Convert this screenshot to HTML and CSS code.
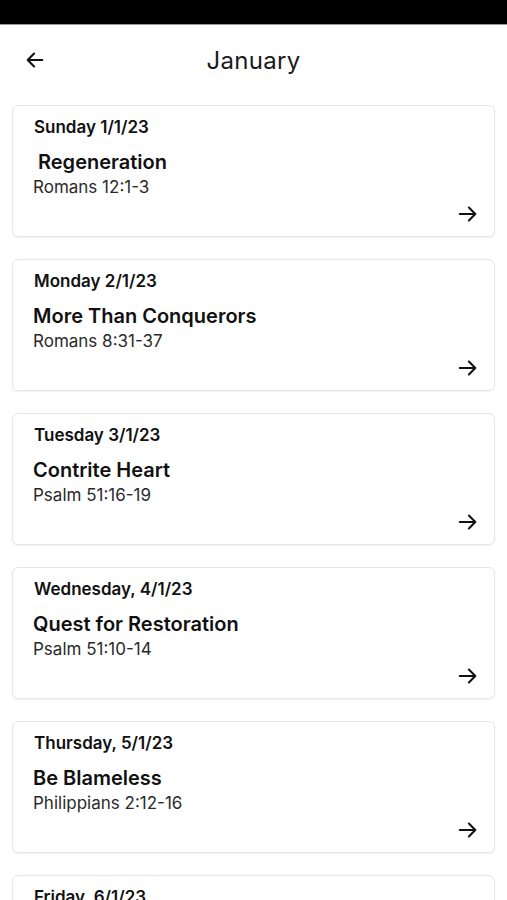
FILE: index.html
```html
<!DOCTYPE html>
<html lang="en">
<head>
<meta charset="utf-8">
<title>January</title>
<link rel="stylesheet" href="styles.css">
</head>
<body>
<div class="statusbar"></div>
<header class="topbar">
  <button class="back" aria-label="Back">
    <svg width="22" height="22" viewBox="0 0 24 24" fill="none" stroke="#111" stroke-width="2.2" stroke-linecap="round" stroke-linejoin="round"><path d="M20 12H4M11 5l-7 7 7 7"/></svg>
  </button>
  <h1 class="title">January</h1>
</header>
<main class="list">
  <article class="card">
    <div class="date">Sunday 1/1/23</div>
    <div class="name indent">Regeneration</div>
    <div class="ref">Romans 12:1-3</div>
    <div class="go"><svg width="22" height="22" viewBox="0 0 24 24" fill="none" stroke="#111" stroke-width="2.2" stroke-linecap="round" stroke-linejoin="round"><path d="M3 12h17M13 5l7 7-7 7"/></svg></div>
  </article>
  <article class="card">
    <div class="date">Monday 2/1/23</div>
    <div class="name">More Than Conquerors</div>
    <div class="ref">Romans 8:31-37</div>
    <div class="go"><svg width="22" height="22" viewBox="0 0 24 24" fill="none" stroke="#111" stroke-width="2.2" stroke-linecap="round" stroke-linejoin="round"><path d="M3 12h17M13 5l7 7-7 7"/></svg></div>
  </article>
  <article class="card">
    <div class="date">Tuesday 3/1/23</div>
    <div class="name">Contrite Heart</div>
    <div class="ref">Psalm 51:16-19</div>
    <div class="go"><svg width="22" height="22" viewBox="0 0 24 24" fill="none" stroke="#111" stroke-width="2.2" stroke-linecap="round" stroke-linejoin="round"><path d="M3 12h17M13 5l7 7-7 7"/></svg></div>
  </article>
  <article class="card">
    <div class="date">Wednesday, 4/1/23</div>
    <div class="name">Quest for Restoration</div>
    <div class="ref">Psalm 51:10-14</div>
    <div class="go"><svg width="22" height="22" viewBox="0 0 24 24" fill="none" stroke="#111" stroke-width="2.2" stroke-linecap="round" stroke-linejoin="round"><path d="M3 12h17M13 5l7 7-7 7"/></svg></div>
  </article>
  <article class="card">
    <div class="date">Thursday, 5/1/23</div>
    <div class="name">Be Blameless</div>
    <div class="ref">Philippians 2:12-16</div>
    <div class="go"><svg width="22" height="22" viewBox="0 0 24 24" fill="none" stroke="#111" stroke-width="2.2" stroke-linecap="round" stroke-linejoin="round"><path d="M3 12h17M13 5l7 7-7 7"/></svg></div>
  </article>
  <article class="card">
    <div class="date">Friday, 6/1/23</div>
  </article>
</main>
</body>
</html>
```
FILE: styles.css
```css
* { box-sizing: border-box; }
html, body { margin: 0; padding: 0; }
body {
  width: 507px;
  height: 900px;
  overflow: hidden;
  background: #fff;
  font-family: Inter, "Liberation Sans", sans-serif;
  color: #111;
}
.statusbar {
  height: 25px;
  background: #000;
  border-bottom: 1px solid #9a9a9a;
}
.topbar {
  height: 70px;
  display: flex;
  align-items: center;
  justify-content: center;
  position: relative;
}
.back {
  position: absolute;
  left: 24px;
  top: 24px;
  border: 0;
  background: none;
  padding: 0;
  width: 22px;
  height: 22px;
  display: flex;
}
.title {
  margin: 0;
  font-size: 24px;
  font-weight: 400;
  letter-spacing: 0.3px;
  color: #1a1a1a;
}
.list {
  padding: 10px 12px 0;
  display: flex;
  flex-direction: column;
  gap: 22px;
}
.card {
  height: 132px;
  border: 1px solid #e6e6e6;
  border-radius: 6px;
  box-shadow: 0 1px 2px rgba(0,0,0,0.06);
  padding: 11px 15px 0 21px;
  display: flex;
  flex-direction: column;
  flex-shrink: 0;
}
.date {
  font-size: 17px;
  font-weight: 600;
  line-height: 20px;
  color: #111;
}
.name {
  margin-top: 13px;
  margin-left: -1px;
  font-size: 20px;
  font-weight: 600;
  line-height: 24px;
  color: #111;
}
.name.indent { margin-left: 4px; }
.ref {
  margin-top: 3px;
  margin-left: -1px;
  font-size: 17px;
  font-weight: 400;
  line-height: 20px;
  color: #2a2a2a;
}
.go {
  margin-top: 6px;
  align-self: flex-end;
  width: 22px;
  height: 22px;
  display: flex;
}
```
